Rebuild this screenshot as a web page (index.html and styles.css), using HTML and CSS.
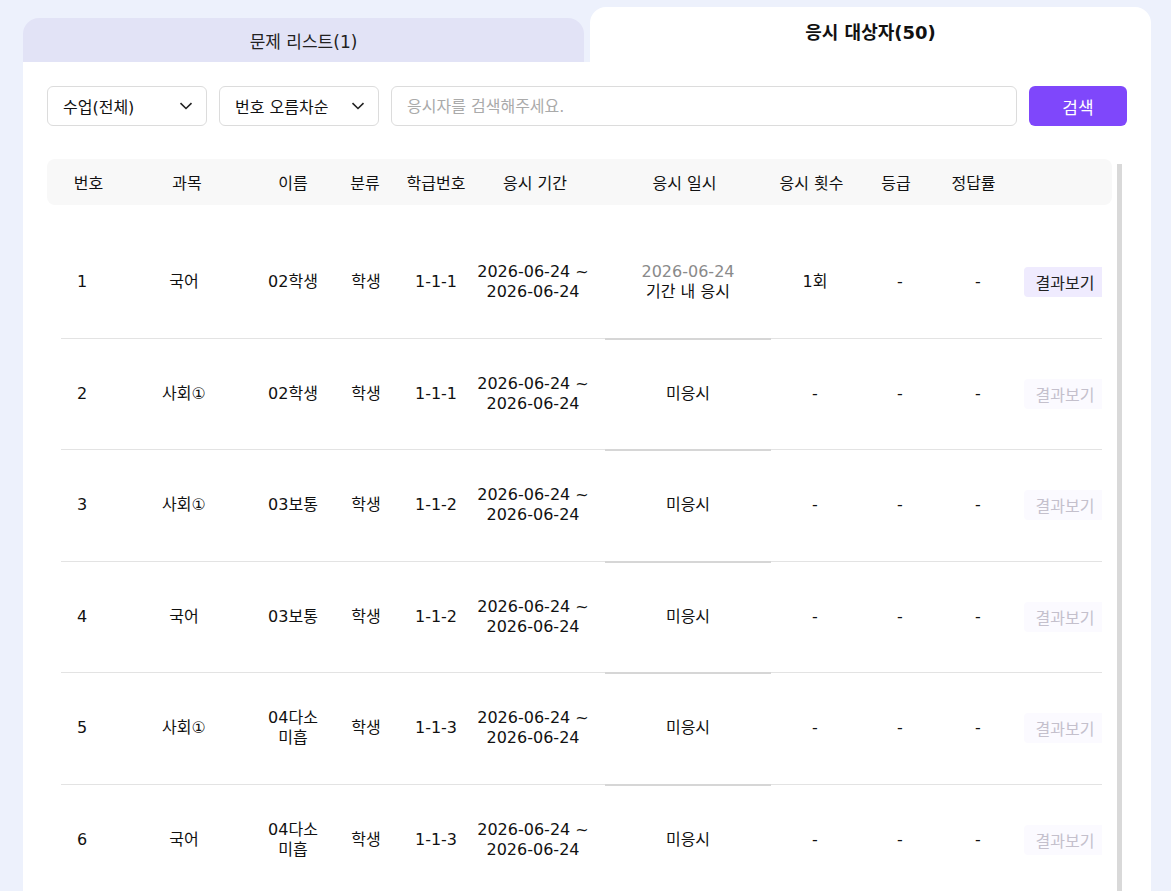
FILE: index.html
```html
<!DOCTYPE html>
<html lang="ko">
<head>
  <meta charset="UTF-8" />
  <title>응시 대상자</title>
  <link rel="stylesheet" href="styles.css">
</head>
<body>

  <div class="page">
    <!-- Tabs -->
    <div class="tabs">
      <div class="tab">문제 리스트(1)</div>
      <div class="tab active">응시 대상자(50)</div>
    </div>

    <div class="panel">
      <!-- Filters -->
      <div class="filters">
        <div class="select">
          <span>수업(전체)</span>
          <svg class="chevron" width="14" height="8" viewBox="0 0 14 8"><polyline points="1.5,1.2 7,6.5 12.5,1.2" /></svg>
        </div>
        <div class="select">
          <span>번호 오름차순</span>
          <svg class="chevron" width="14" height="8" viewBox="0 0 14 8"><polyline points="1.5,1.2 7,6.5 12.5,1.2" /></svg>
        </div>
        <input class="search" type="text" placeholder="응시자를 검색해주세요.">
        <button class="search-btn">검색</button>
      </div>

      <!-- Examinee list -->
      <div class="list">
        <div class="list-main">
          <div class="list-head">
            <div class="cell">번호</div>
            <div class="cell">과목</div>
            <div class="cell">이름</div>
            <div class="cell">분류</div>
            <div class="cell">학급번호</div>
            <div class="cell">응시 기간</div>
            <div class="cell">응시 일시</div>
            <div class="cell">응시 횟수</div>
            <div class="cell">등급</div>
            <div class="cell">정답률</div>
            <div class="cell"></div>
          </div>

          <div class="list-body">
            <div class="row">
              <div class="cell">1</div>
              <div class="cell">국어</div>
              <div class="cell">02학생</div>
              <div class="cell">학생</div>
              <div class="cell">1-1-1</div>
              <div class="cell"><div>2026-06-24 ~<br>2026-06-24</div></div>
              <div class="cell when"><div><span class="muted">2026-06-24</span><br>기간 내 응시</div></div>
              <div class="cell">1회</div>
              <div class="cell">-</div>
              <div class="cell">-</div>
              <div class="cell action"><button class="result-btn">결과보기</button></div>
            </div>

            <div class="row">
              <div class="cell">2</div>
              <div class="cell">사회①</div>
              <div class="cell">02학생</div>
              <div class="cell">학생</div>
              <div class="cell">1-1-1</div>
              <div class="cell"><div>2026-06-24 ~<br>2026-06-24</div></div>
              <div class="cell when">미응시</div>
              <div class="cell">-</div>
              <div class="cell">-</div>
              <div class="cell">-</div>
              <div class="cell action"><button class="result-btn disabled">결과보기</button></div>
            </div>

            <div class="row">
              <div class="cell">3</div>
              <div class="cell">사회①</div>
              <div class="cell">03보통</div>
              <div class="cell">학생</div>
              <div class="cell">1-1-2</div>
              <div class="cell"><div>2026-06-24 ~<br>2026-06-24</div></div>
              <div class="cell when">미응시</div>
              <div class="cell">-</div>
              <div class="cell">-</div>
              <div class="cell">-</div>
              <div class="cell action"><button class="result-btn disabled">결과보기</button></div>
            </div>

            <div class="row">
              <div class="cell">4</div>
              <div class="cell">국어</div>
              <div class="cell">03보통</div>
              <div class="cell">학생</div>
              <div class="cell">1-1-2</div>
              <div class="cell"><div>2026-06-24 ~<br>2026-06-24</div></div>
              <div class="cell when">미응시</div>
              <div class="cell">-</div>
              <div class="cell">-</div>
              <div class="cell">-</div>
              <div class="cell action"><button class="result-btn disabled">결과보기</button></div>
            </div>

            <div class="row">
              <div class="cell">5</div>
              <div class="cell">사회①</div>
              <div class="cell">04다소 미흡</div>
              <div class="cell">학생</div>
              <div class="cell">1-1-3</div>
              <div class="cell"><div>2026-06-24 ~<br>2026-06-24</div></div>
              <div class="cell when">미응시</div>
              <div class="cell">-</div>
              <div class="cell">-</div>
              <div class="cell">-</div>
              <div class="cell action"><button class="result-btn disabled">결과보기</button></div>
            </div>

            <div class="row">
              <div class="cell">6</div>
              <div class="cell">국어</div>
              <div class="cell">04다소 미흡</div>
              <div class="cell">학생</div>
              <div class="cell">1-1-3</div>
              <div class="cell"><div>2026-06-24 ~<br>2026-06-24</div></div>
              <div class="cell when">미응시</div>
              <div class="cell">-</div>
              <div class="cell">-</div>
              <div class="cell">-</div>
              <div class="cell action"><button class="result-btn disabled">결과보기</button></div>
            </div>
          </div>
        </div>

        <!-- scrollbar -->
        <div class="scroll-track"><div class="scroll-thumb"></div></div>
      </div>
    </div>
  </div>

</body>
</html>
```

FILE: styles.css
```css
* {
  box-sizing: border-box;
}

body {
  margin: 0;
  font-family: "DejaVu Sans", "Noto Sans CJK KR", sans-serif;
  color: #111;
  background: #edf1fc;
  height: 100vh;
  overflow: hidden;
}

.page {
  padding: 7px 20px 0 23px;
}

/* Tabs */
.tabs {
  display: flex;
  align-items: flex-end;
  gap: 6px;
}

.tab {
  flex: 1;
  height: 44px;
  display: flex;
  align-items: center;
  justify-content: center;
  background: #e2e3f6;
  border-radius: 16px 16px 0 0;
  font-size: 17px;
  color: #222;
}

.tab.active {
  height: 55px;
  align-items: flex-start;
  padding-top: 14px;
  line-height: 24px;
  background: #fff;
  font-size: 18px;
  font-weight: 600;
  color: #111;
}

/* Panel */
.panel {
  background: #fff;
  padding: 24px;
  min-height: calc(100vh - 62px);
}

.filters {
  display: flex;
  gap: 12px;
  height: 40px;
}

.select {
  width: 160px;
  display: flex;
  align-items: center;
  justify-content: space-between;
  padding: 0 13px 0 15px;
  border: 1px solid #dcdcdc;
  border-radius: 6px;
  font-size: 16px;
  color: #111;
}

.chevron polyline {
  fill: none;
  stroke: #222;
  stroke-width: 1.6;
}

.search {
  flex: 1;
  padding: 0 15px;
  border: 1px solid #dcdcdc;
  border-radius: 6px;
  font-family: inherit;
  font-size: 16px;
  color: #111;
  outline: none;
}

.search::placeholder {
  color: #aaa;
}

.search-btn {
  width: 98px;
  border: none;
  border-radius: 6px;
  background: #7f47fb;
  color: #fff;
  font-family: inherit;
  font-size: 17px;
}

/* List */
.list {
  display: flex;
  margin-top: 33px;
}

.list-main {
  flex: 1;
}

.scroll-track {
  width: 15px;
  padding: 5px 5px 0;
}

.scroll-thumb {
  width: 5px;
  height: 100%;
  background: #d9d9d9;
}

.cell {
  display: flex;
  align-items: center;
  justify-content: center;
  text-align: center;
}

.list-head {
  display: grid;
  grid-template-columns: 83px 114px 98px 46px 96px 102px 197px 57px 112px 43px 117px;
  height: 46px;
  background: #f8f8f8;
  border-radius: 8px;
  font-size: 16px;
  white-space: nowrap;
}

.list-body {
  padding: 22px 10px 0 14px;
}

.row {
  display: grid;
  grid-template-columns: 42px 162px 56px 90px 50px 144px 166px 88px 82px 74px 87px;
  height: 111.5px;
  border-bottom: 1px solid #e3e3e3;
  font-size: 16px;
  line-height: 20px;
}

.row .when {
  box-shadow: 0 2px 0 #d6d6d6;
}

.muted {
  color: #8a8a8a;
}

.action {
  justify-content: flex-start;
  padding-left: 9px;
  overflow: hidden;
}

.result-btn {
  flex-shrink: 0;
  width: 82px;
  height: 30px;
  border: none;
  border-radius: 4px;
  background: #efebfe;
  color: #222;
  font-family: inherit;
  font-size: 16px;
  padding: 0;
}

.result-btn.disabled {
  background: #fbfaff;
  color: #c4c0cc;
}
```
